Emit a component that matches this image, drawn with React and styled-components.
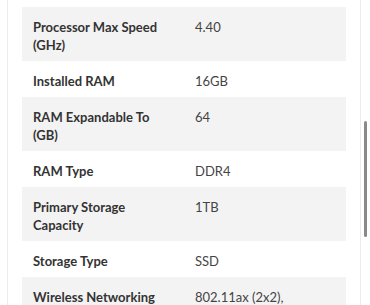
import React from 'react'
import styled, { createGlobalStyle } from 'styled-components'

const specs = [
  ['Processor Max Speed (GHz)', '4.40'],
  ['Installed RAM', '16GB'],
  ['RAM Expandable To (GB)', '64'],
  ['RAM Type', 'DDR4'],
  ['Primary Storage Capacity', '1TB'],
  ['Storage Type', 'SSD'],
  ['Wireless Networking', '802.11ax (2x2), Bluetooth 5.1'],
]

export default function App() {
  return (
    <>
      <Global />
      <Page>
        <Card>
          <Table>
            <tbody>
              {specs.map(([label, value], i) => (
                <Row key={label} $shaded={i % 2 === 0}>
                  <Label>{label}</Label>
                  <Value>{value}</Value>
                </Row>
              ))}
            </tbody>
          </Table>
        </Card>
        <Scrollbar />
      </Page>
    </>
  )
}

const Global = createGlobalStyle`
  html, body {
    margin: 0;
    padding: 0;
    background: #fff;
    overflow: hidden;
  }
  body {
    font-family: Lato, "Open Sans", sans-serif;
  }
`

const Page = styled.div`
  position: relative;
  width: 370px;
  height: 305px;
  overflow: hidden;
`

const Card = styled.div`
  margin-left: 7px;
  width: 352px;
  min-height: 305px;
  padding: 7px 14px 0;
  box-sizing: border-box;
  border-left: 1px solid #ececec;
  border-right: 1px solid #ececec;
  width: 354px;
`

const Table = styled.table`
  width: 100%;
  border-collapse: collapse;
  table-layout: fixed;
`

const Row = styled.tr`
  background: ${p => (p.$shaded ? '#f3f3f3' : '#fff')};
`

const Cell = styled.td`
  vertical-align: top;
  padding: 11px 11px 7px;
  font-size: 13px;
  line-height: 18px;
  width: 50%;
`

const Label = styled(Cell)`
  font-weight: 700;
  color: #333;
`

const Value = styled(Cell)`
  font-weight: 400;
  color: #444;
`

const Scrollbar = styled.div`
  position: absolute;
  left: 364px;
  top: 121px;
  width: 3px;
  height: 116px;
  border-radius: 2px;
  background: #8a8a8a;
`
